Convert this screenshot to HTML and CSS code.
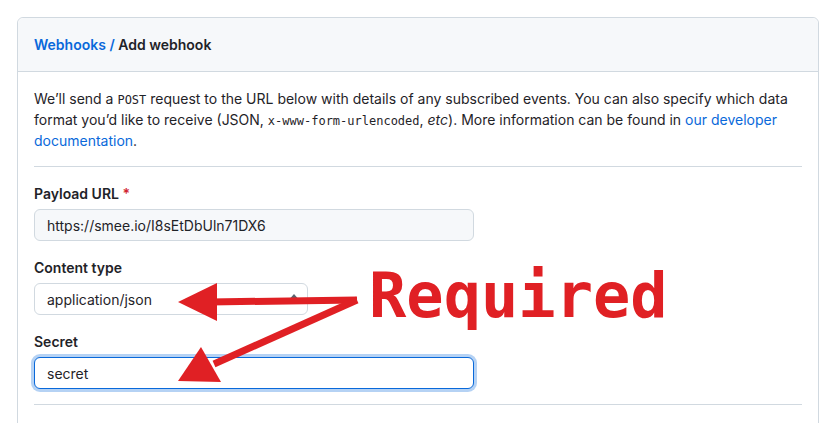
FILE: index.html
```html
<!DOCTYPE html>
<html lang="en">
<head>
    <meta charset="UTF-8">
    <meta name="viewport" content="width=device-width, initial-scale=1.0">
    <title>Add webhook</title>
    <link rel="stylesheet" href="styles.css">
</head>
<body>
    <div class="box">
        <div class="box-header">
            <a href="#" class="crumb">Webhooks /</a> Add webhook
        </div>
        <div class="box-body">
            <p class="intro">
                We’ll send a <code>POST</code> request to the URL below with details of any subscribed events. You can also specify which data format you’d like to receive (JSON, <code>x-www-form-urlencoded</code>, <em>etc</em>). More information can be found in <a href="#">our developer documentation</a>.
            </p>

            <div class="form-group">
                <label for="url">Payload URL <span class="req">*</span></label>
                <input type="text" id="url" class="form-control url-input" value="https://smee.io/I8sEtDbUln71DX6">
            </div>

            <div class="form-group">
                <label for="ctype">Content type</label>
                <div class="select-wrap">
                    <select id="ctype" class="form-select">
                        <option>application/json</option>
                        <option>application/x-www-form-urlencoded</option>
                    </select>
                    <svg class="select-icon" width="8" height="16" viewBox="0 0 8 16">
                        <path d="M4 3 L7.5 7 H0.5 Z" fill="#59636e"/>
                        <path d="M4 13 L7.5 9 H0.5 Z" fill="#59636e"/>
                    </svg>
                </div>
            </div>

            <div class="form-group">
                <label for="secret">Secret</label>
                <input type="text" id="secret" class="form-control url-input focused" value="secret">
            </div>
        </div>
    </div>

    <!-- annotation drawn over the screenshot -->
    <svg class="annotation" width="838" height="423" viewBox="0 0 838 423">
        <g fill="#e02024" stroke="#e02024">
            <line x1="210" y1="302" x2="357" y2="300" stroke-width="7"/>
            <polygon points="178,302 217,283 217,321" stroke="none"/>
            <line x1="214" y1="364" x2="357" y2="300" stroke-width="7"/>
            <polygon points="178,381 201,347 221,382" stroke="none"/>
        </g>
        <text x="369" y="317" class="required">Required</text>
    </svg>
</body>
</html>
```

FILE: styles.css
```css
body {
    margin: 0;
    padding: 17px 0 0 17px;
    font-family: Inter, "Liberation Sans", sans-serif;
    font-size: 14px;
    line-height: 21px;
    color: #1f2328;
    background-color: #ffffff;
    overflow: hidden;
}
a {
    color: #0969da;
    text-decoration: none;
}
.box {
    width: 800px;
    height: 500px;
    border: 1px solid #d1d9e0;
    border-radius: 6px;
    background-color: #ffffff;
}
.box-header {
    padding: 16px;
    background-color: #f6f8fa;
    border-bottom: 1px solid #d1d9e0;
    border-radius: 6px 6px 0 0;
    font-weight: 600;
}
.box-body {
    padding: 16px;
}
.intro {
    margin: 0;
    padding-bottom: 15px;
    border-bottom: 1px solid #d1d9e0;
}
code {
    font-family: "DejaVu Sans Mono", monospace;
    font-size: 12px;
    line-height: 1;
}
.form-group {
    margin-top: 16px;
}
.form-group:last-child {
    padding-bottom: 15px;
    border-bottom: 1px solid #d1d9e0;
}
label {
    display: block;
    font-weight: 600;
    margin-bottom: 5px;
}
.req {
    color: #d1242f;
}
.form-control {
    box-sizing: border-box;
    width: 440px;
    height: 32px;
    padding: 5px 12px;
    font-family: Inter, "Liberation Sans", sans-serif;
    font-size: 14px;
    color: #1f2328;
    background-color: #f6f8fa;
    border: 1px solid #d1d9e0;
    border-radius: 6px;
    outline: none;
}
.focused {
    background-color: #ffffff;
    border-color: #0969da;
    box-shadow: 0 0 0 3px rgba(9, 105, 218, 0.3);
}
.select-wrap {
    position: relative;
    width: 274px;
}
.form-select {
    box-sizing: border-box;
    width: 274px;
    height: 32px;
    padding: 5px 12px;
    font-family: Inter, "Liberation Sans", sans-serif;
    font-size: 14px;
    color: #1f2328;
    background-color: #ffffff;
    border: 1px solid #d1d9e0;
    border-radius: 6px;
    appearance: none;
    -webkit-appearance: none;
}
.select-icon {
    position: absolute;
    right: 10px;
    top: 8px;
}
.annotation {
    position: absolute;
    top: 0;
    left: 0;
    pointer-events: none;
}
.required {
    font-family: "DejaVu Sans Mono", monospace;
    font-weight: bold;
    font-size: 62px;
    fill: #e02024;
}
```
